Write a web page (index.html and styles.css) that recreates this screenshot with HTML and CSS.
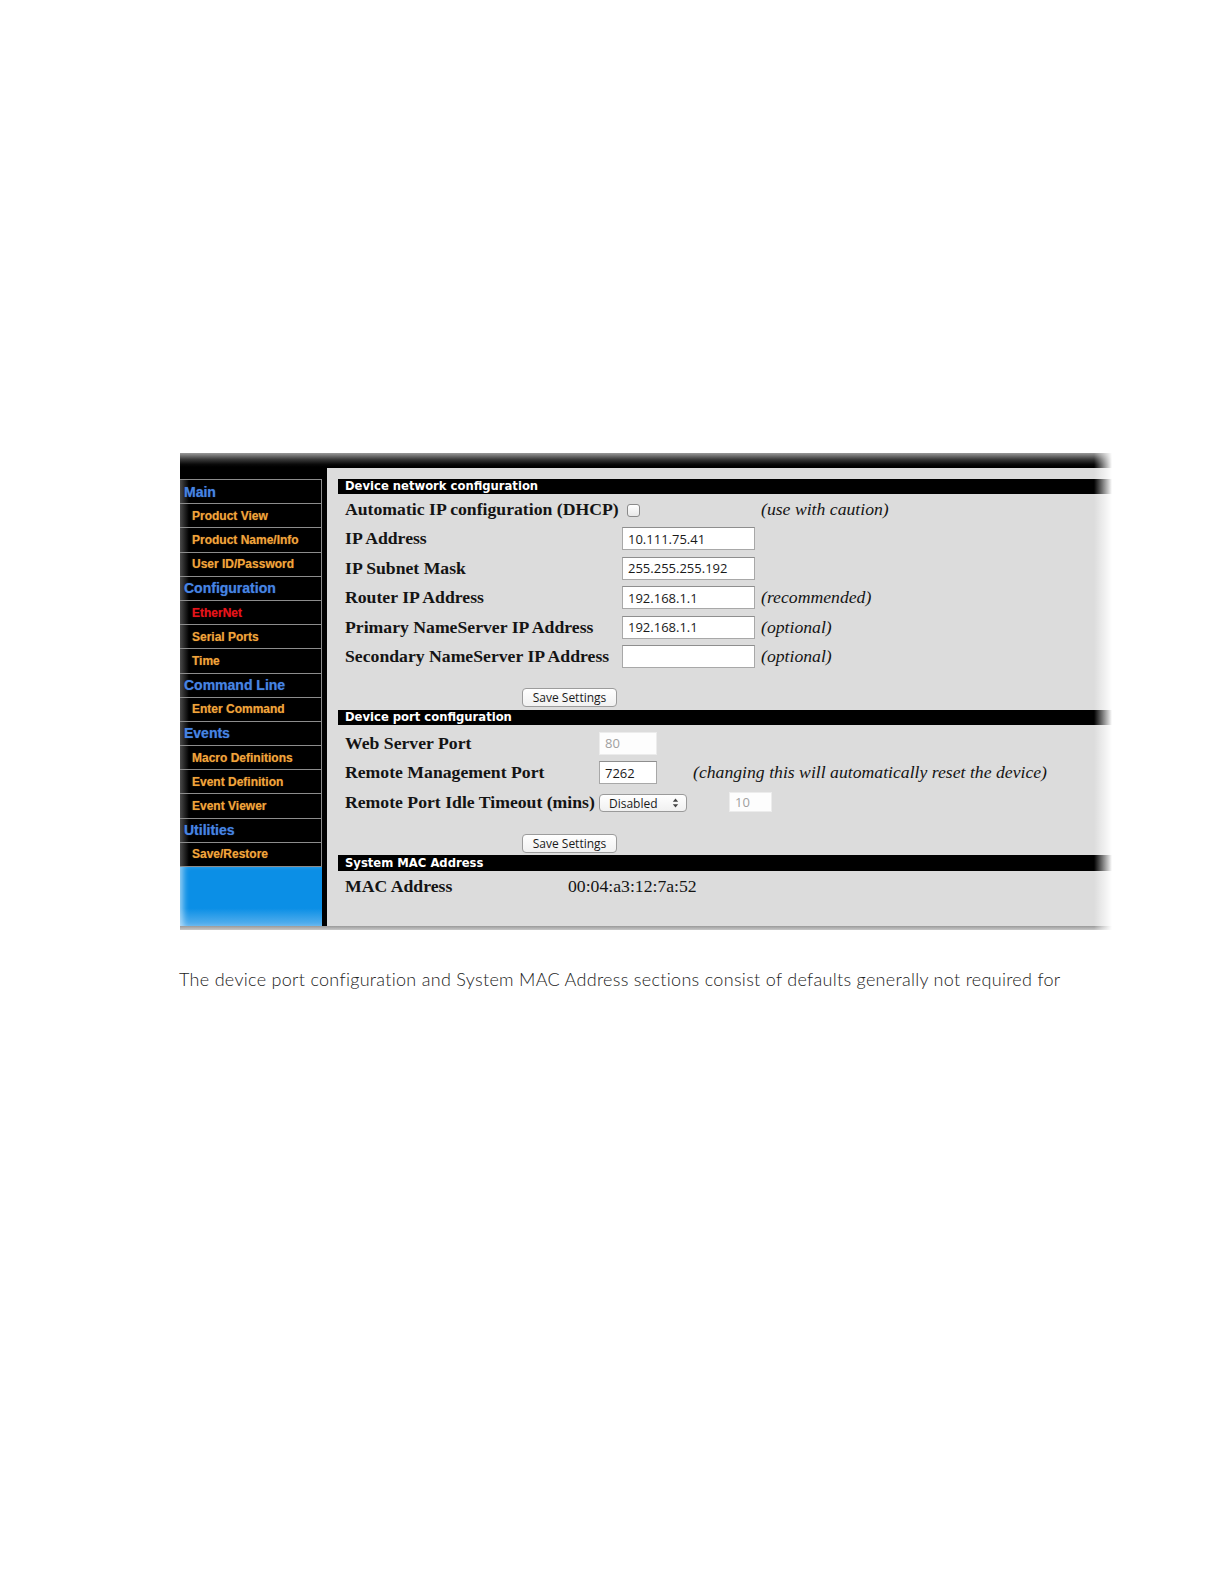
FILE: index.html
```html
<!DOCTYPE html>
<html>
<head>
<meta charset="utf-8">
<link rel="stylesheet" href="styles.css">
</head>
<body>
<div class="shot">
  <div class="topbar"></div>
  <div class="frame">
    <nav class="sidebar">
      <div class="nav-item nav-head">Main</div>
      <div class="nav-item">Product View</div>
      <div class="nav-item">Product Name/Info</div>
      <div class="nav-item">User ID/Password</div>
      <div class="nav-item nav-head">Configuration</div>
      <div class="nav-item nav-active">EtherNet</div>
      <div class="nav-item">Serial Ports</div>
      <div class="nav-item">Time</div>
      <div class="nav-item nav-head">Command Line</div>
      <div class="nav-item">Enter Command</div>
      <div class="nav-item nav-head">Events</div>
      <div class="nav-item">Macro Definitions</div>
      <div class="nav-item">Event Definition</div>
      <div class="nav-item">Event Viewer</div>
      <div class="nav-item nav-head">Utilities</div>
      <div class="nav-item nav-last">Save/Restore</div>
      <div class="nav-fill"></div>
    </nav>
    <main class="panel">
      <div class="sec-head">Device network configuration</div>
      <div class="sec1">
        <div class="row row-first">
          <div class="label l1">Automatic IP configuration (DHCP)</div>
          <div class="cbcell"><span class="checkbox"></span></div>
          <div class="note note-cb">(use with caution)</div>
        </div>
        <div class="row">
          <div class="label l1">IP Address</div>
          <div class="field f1">10.111.75.41</div>
        </div>
        <div class="row">
          <div class="label l1">IP Subnet Mask</div>
          <div class="field f1">255.255.255.192</div>
        </div>
        <div class="row">
          <div class="label l1">Router IP Address</div>
          <div class="field f1">192.168.1.1</div>
          <div class="note">(recommended)</div>
        </div>
        <div class="row">
          <div class="label l1">Primary NameServer IP Address</div>
          <div class="field f1">192.168.1.1</div>
          <div class="note">(optional)</div>
        </div>
        <div class="row">
          <div class="label l1">Secondary NameServer IP Address</div>
          <div class="field f1"></div>
          <div class="note">(optional)</div>
        </div>
      </div>
      <div class="btn-row btn-row1"><span class="btn">Save Settings</span></div>
      <div class="sec-head sec-head2">Device port configuration</div>
      <div class="sec2">
        <div class="row">
          <div class="label l2">Web Server Port</div>
          <div class="field f2 disabled">80</div>
        </div>
        <div class="row">
          <div class="label l2">Remote Management Port</div>
          <div class="field f2">7262</div>
          <div class="note note2">(changing this will automatically reset the device)</div>
        </div>
        <div class="row">
          <div class="label l2">Remote Port Idle Timeout (mins)</div>
          <div class="select">Disabled
            <svg class="updown" width="7" height="10" viewBox="0 0 7 10"><path d="M3.5 0.5 L6.2 3.8 L0.8 3.8 Z M3.5 9.5 L6.2 6.2 L0.8 6.2 Z" fill="#444"/></svg>
          </div>
          <div class="field f3 disabled">10</div>
        </div>
      </div>
      <div class="btn-row btn-row2"><span class="btn">Save Settings</span></div>
      <div class="sec-head sec-head3">System MAC Address</div>
      <div class="row row-mac">
        <div class="label l3">MAC Address</div>
        <div class="mac">00:04:a3:12:7a:52</div>
      </div>
    </main>
  </div>
  <div class="bottombar"></div>
</div>
<p class="caption">The device port configuration and System MAC Address sections consist of defaults generally not required for</p>
</body>
</html>
```
FILE: styles.css
```css
html, body {
  margin: 0;
  padding: 0;
  background: #ffffff;
}

.shot {
  position: relative;
  margin: 453px 0 0 180px;
  width: 932px;
}

.shot::after {
  content: "";
  position: absolute;
  top: 0;
  right: 0;
  bottom: 0;
  width: 18px;
  background: linear-gradient(to right, rgba(255,255,255,0), #ffffff);
}

.topbar {
  height: 14px;
  background: linear-gradient(#9a9a9a 0%, #3a3a3a 45%, #0a0a0a 80%, #000 100%);
}

.frame {
  display: flex;
  background: #000;
}

.sidebar {
  width: 142px;
  padding-top: 12px;
  display: flex;
  flex-direction: column;
  background: #000;
}

.nav-item {
  height: 23.2px;
  border-top: 1px solid #8c8c8c;
  border-right: 1px solid #8c8c8c;
  box-sizing: content-box;
  display: flex;
  align-items: center;
  padding-left: 12px;
  font-family: "Liberation Sans", Arial, sans-serif;
  font-weight: bold;
  font-size: 12px;
  color: #f2a43a;
  background: linear-gradient(to right, #4a4a4a 0px, #000 9px, #000 100%);
  text-shadow: 0 0 1px rgba(242,164,58,0.5);
}

.nav-head {
  padding-left: 4px;
  font-size: 14px;
  color: #4584e4;
  text-shadow: 0 0 1px rgba(69,132,228,0.6);
}

.nav-active {
  color: #e8141a;
  text-shadow: 0 0 1px rgba(232,20,26,0.5);
}

.nav-last {
  border-bottom: 1px solid #8c8c8c;
}

.nav-fill {
  flex: 1;
  background: linear-gradient(to bottom, #0b8fe6 0%, #0b8fe6 70%, #5bb2ee 100%);
  box-shadow: inset 6px 0 6px -3px rgba(255,255,255,0.6);
}

.panel {
  flex: 1;
  margin-left: 5px;
  margin-top: 1px;
  background: #dcdcdc;
  padding: 11px 0 25px 11px;
  font-family: "Liberation Serif", "Times New Roman", serif;
  color: #141414;
}

.sec-head {
  height: 15px;
  background: #000;
  color: #fff;
  font-family: "DejaVu Sans", Verdana, sans-serif;
  font-weight: bold;
  font-size: 11.6px;
  line-height: 15px;
  padding-left: 7px;
}

.sec-head2 {
  margin-top: 3px;
}

.sec-head3 {
  height: 16px;
  line-height: 16px;
  margin-top: 2px;
}

.row {
  display: flex;
  align-items: center;
  height: 29.5px;
  padding-left: 7px;
  font-size: 17.7px;
}

.row-first {
  height: 30px;
}

.label {
  font-weight: bold;
  white-space: nowrap;
}

.l1 { width: 277px; }
.l2 { width: 254px; }
.l3 { width: 223px; }

.cbcell {
  width: 139px;
  display: flex;
  align-items: center;
}

.checkbox {
  display: inline-block;
  width: 11px;
  height: 11px;
  margin-left: 5px;
  margin-top: 2px;
  border: 1px solid #8a8a8a;
  border-radius: 3px;
  background: linear-gradient(#ffffff, #e8e8e8);
}

.field {
  box-sizing: border-box;
  background: #fff;
  border: 1px solid #a8a8a8;
  border-top-color: #8e8e8e;
  font-family: "Open Sans", "DejaVu Sans", sans-serif;
  font-size: 13px;
  color: #1a1a1a;
  padding-left: 5px;
  display: flex;
  align-items: center;
}

.f1 {
  width: 133px;
  height: 23px;
}

.f2 {
  width: 58px;
  height: 23px;
}

.f3 {
  width: 43px;
  height: 20px;
  margin-left: 42px;
}

.disabled {
  border-color: #ececec;
  color: #a0a0a0;
  background: #fdfdfd;
}

.note {
  margin-left: 6px;
  font-style: italic;
  white-space: nowrap;
}

.note-cb {
  margin-left: 0;
}

.note2 {
  margin-left: 36px;
}

.select {
  box-sizing: border-box;
  width: 88px;
  height: 18px;
  margin-top: 2px;
  border: 1px solid #9a9a9a;
  border-radius: 4px;
  background: linear-gradient(#ffffff, #f0f0f0);
  font-family: "Open Sans", "DejaVu Sans", sans-serif;
  font-size: 12px;
  color: #1a1a1a;
  padding-left: 9px;
  display: flex;
  align-items: center;
  justify-content: space-between;
  padding-right: 7px;
}

.btn-row {
  padding-left: 184px;
  display: flex;
}

.btn-row1 { margin-top: 16.5px; }
.btn-row2 { margin-top: 17.25px; }

.sec2 {
  margin-top: 3.25px;
}

.btn {
  box-sizing: border-box;
  width: 95px;
  height: 19px;
  border: 1px solid #9c9c9c;
  border-radius: 4px;
  background: linear-gradient(#ffffff, #f1f1f1);
  font-family: "Open Sans", "DejaVu Sans", sans-serif;
  font-size: 12px;
  color: #1a1a1a;
  display: flex;
  align-items: center;
  justify-content: center;
}

.row-mac {
  height: 30px;
}

.mac {
  font-size: 17.7px;
}

.bottombar {
  height: 4px;
  background: linear-gradient(#9a9a9a, #c8c8c8);
}

.caption {
  margin: 37px 0 0 179px;
  font-family: "Lato", "Open Sans", sans-serif;
  font-weight: 300;
  font-size: 18px;
  letter-spacing: 0.3px;
  line-height: 24px;
  color: #222222;
}
```
